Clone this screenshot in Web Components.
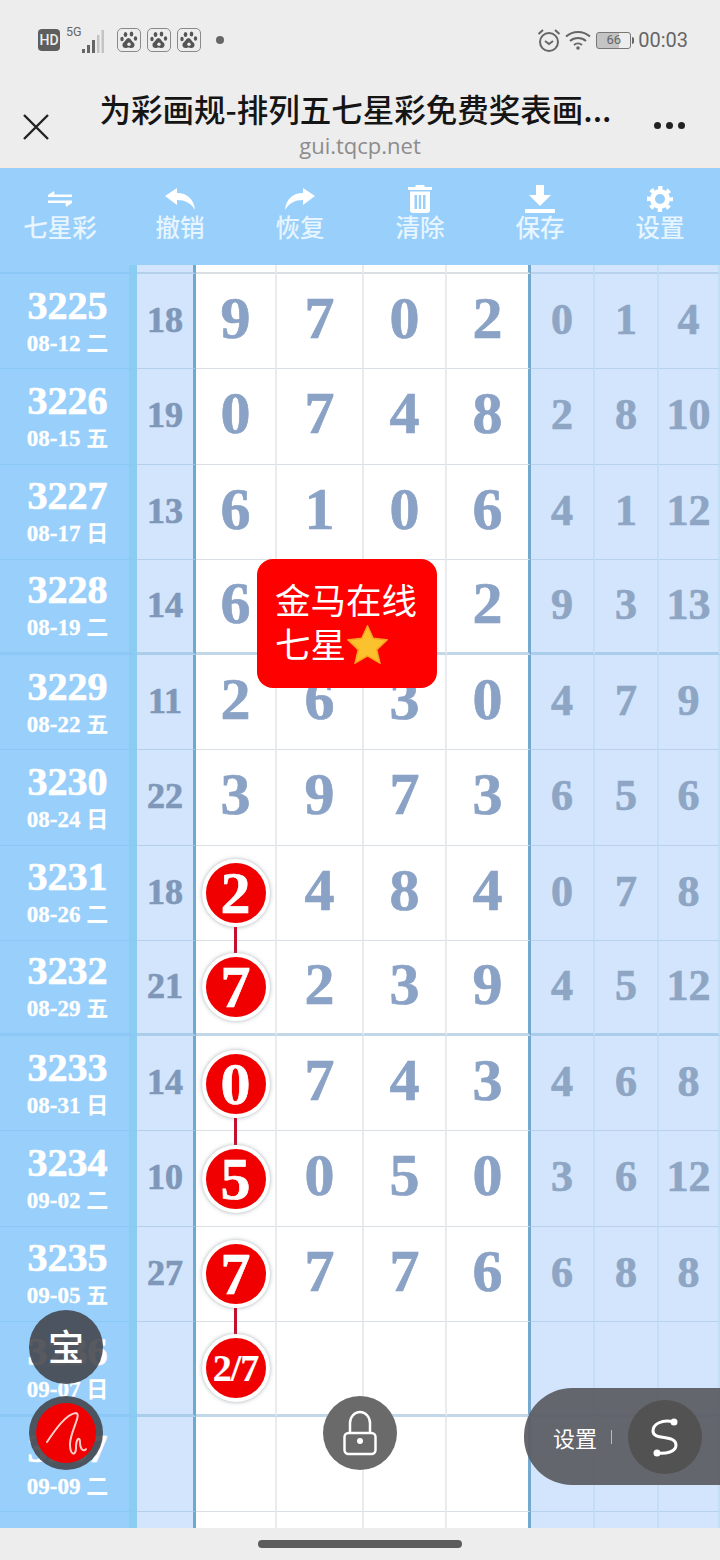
<!DOCTYPE html>
<html lang="zh">
<head>
<meta charset="utf-8">
<title>为彩画规</title>
<style>
  html, body { margin: 0; padding: 0; }
  body {
    width: 720px;
    height: 1560px;
    overflow: hidden;
    position: relative;
    background: #ededed;
    display: flex;
    flex-direction: column;
    font-family: Roboto, "Noto Sans CJK SC", sans-serif;
  }
</style>
</head>
<body>
  <status-bar></status-bar>
  <title-bar title-text="为彩画规-排列五七星彩免费奖表画..." url="gui.tqcp.net"></title-bar>
  <tool-bar>
    <tool-item>
      <svg slot="icon" width="24" height="16" viewBox="0 0 24 16" fill="#fff"><path d="M6 0 0 4v2h24V3.5H6.5zM0 9.5h24V12l-6 4-.5-4H0z"/></svg>
      七星彩
    </tool-item>
    <tool-item>
      <svg slot="icon" width="30" height="22" viewBox="0 0 30 22" fill="#fff"><path d="M0 8 12 0v5c10 0 17 6 18 17-4-7-10-10-18-10v5z"/></svg>
      撤销
    </tool-item>
    <tool-item>
      <svg slot="icon" width="30" height="22" viewBox="0 0 30 22" fill="#fff"><path d="M30 8 18 0v5C8 5 1 11 0 22c4-7 10-10 18-10v5z"/></svg>
      恢复
    </tool-item>
    <tool-item>
      <svg slot="icon" width="24" height="28" viewBox="0 0 24 28" fill="#fff"><path fill-rule="evenodd" d="M8 0h8l1 2h7v3H0V2h7zM2 6.500h20V25a3 3 0 0 1-3 3H5a3 3 0 0 1-3-3zM6.500 10v14h2.500V10zM10.800 10v14h2.400V10zM15 10v14h2.500V10z"/></svg>
      清除
    </tool-item>
    <tool-item>
      <svg slot="icon" width="30" height="28" viewBox="0 0 30 28" fill="#fff"><path d="M11 0h8v10h7L15 21 4 10h7zM1 24h28a1.500 1.500 0 0 1 0 4H1a1.500 1.500 0 0 1 0-4z"/></svg>
      保存
    </tool-item>
    <tool-item>
      <svg slot="icon" width="26" height="26" viewBox="-13 -13 26 26" fill="none" stroke="#fff"><circle r="10.800" stroke-width="4.400" stroke-dasharray="4.240 4.240" stroke-dashoffset="2.120"/><circle r="7.500" stroke-width="5"/></svg>
      设置
    </tool-item>
  </tool-bar>
  <lottery-table></lottery-table>
  <div style="height:32px;flex:none;display:flex;justify-content:center;align-items:center">
    <div style="width:204px;height:8px;border-radius:4px;background:#5c5c5c"></div>
  </div>

  <promo-box style="left:257px;top:559px">金马在线<br>七星<svg width="41" height="39" viewBox="0 0 40 38" style="vertical-align:-6px;margin-left:1px"><path fill="#fcc22e" stroke="#f6a623" stroke-width="1.500" d="M20 1l5.500 12 13.500 1.500-10 9.500 3 13-12-7-12 7 3-13-10-9.500L14.500 13z"/></svg></promo-box>

  <float-button style="left:29px;top:1310px"><span style="font-size:36px;line-height:1;font-weight:500;margin-top:-5px">宝</span></float-button>
  <float-button style="left:29px;top:1396px">
    <svg width="74" height="74" viewBox="0 0 74 74"><circle cx="37" cy="37" r="30" fill="#f00000"/><path fill="none" stroke="#ffd0c8" stroke-width="2" stroke-linecap="round" d="M18 46C26 34 37 18 47 17c6 1-6 19-6 31 0 12 6 12 6 4 0-10 4-12 4-6 0 8 4 10 6 7"/></svg>
  </float-button>
  <float-button tone="gray" style="left:323px;top:1396px">
    <svg width="74" height="74" viewBox="0 0 74 74" fill="none" stroke="#fff" stroke-width="2.500"><path d="M27 37V27a10 11 0 0 1 20 0v10"/><rect x="21.500" y="37" width="31" height="21" rx="4"/><circle cx="37" cy="45" r="3" fill="#fff" stroke="none"/></svg>
  </float-button>
  <side-pill style="top:1388px">设置</side-pill>

<script>
class StatusBar extends HTMLElement {
  constructor() {
    super();
    this.attachShadow({ mode: "open" });
    // same paw three times
    const paw = `
      <span class="paw"><svg width="20" height="20" viewBox="0 0 20 20" fill="#555">
        <ellipse cx="6.500" cy="4.500" rx="1.800" ry="2.500"/>
        <ellipse cx="12.500" cy="4" rx="1.800" ry="2.500"/>
        <ellipse cx="3" cy="9" rx="1.700" ry="2.200"/>
        <ellipse cx="16.500" cy="8.500" rx="1.700" ry="2.200"/>
        <path d="M9.500 8c2 0 3 3 5 4.500 2 2 1 5.500-2 5.500-1.500 0-2-.6-3-.6s-1.500.6-3 .6c-3 0-4-3.500-2-5.500C6.500 11 7.500 8 9.500 8z"/>
        <circle cx="10" cy="14.300" r="1.700" fill="#ededed"/>
      </svg></span>`;
    this.shadowRoot.innerHTML = `
      <style>
        :host {
          display: flex;
          align-items: center;
          height: 80px;
          flex: none;
          box-sizing: border-box;
          padding: 0 32px 0 38px;
          background: #ededed;
          color: #666;
          font-family: Roboto, sans-serif;
        }
        .hd { width: 22px; height: 22px; border-radius: 4px; background: #5e5e5e; color: #eee; font-size: 14px; font-weight: 500; line-height: 22px; text-align: center; }
        .net { position: relative; width: 38px; height: 26px; margin-left: 6px; }
        .net span { position: absolute; left: 0; top: -1px; font-size: 12.500px; line-height: 12px; }
        .net svg { position: absolute; left: 16px; top: 3px; }
        .paws { display: flex; gap: 6px; margin-left: 13px; }
        .paw { width: 24px; height: 24px; box-sizing: border-box; border: 1.500px solid #8a8a8a; border-radius: 5px; display: flex; align-items: center; justify-content: center; }
        .dot { width: 8px; height: 8px; border-radius: 50%; background: #666; margin-left: 15px; }
        .right { margin-left: auto; display: flex; align-items: center; }
        .battery { box-sizing: border-box; width: 35px; height: 17px; margin-left: 5px; border: 1.500px solid #777; border-radius: 3px; font-size: 13px; line-height: 14px; text-align: center; background: linear-gradient(90deg, #c4c4c4 0 66%, transparent 66%); }
        .nub { width: 2px; height: 7px; background: #666; border-radius: 0 2px 2px 0; margin-left: 1px; }
        .time { margin-left: 4px; font-size: 20px; }
      </style>
      <div class="hd">HD</div>
      <div class="net">
        <span>5G</span>
        <svg width="22" height="24" viewBox="0 0 22 24"><path fill="#666" d="M0 19h3v4H0zM5 15h3v8H5zM10 10h3v13h-3z"/><path fill="#c4c4c4" d="M15 5h2.500v18H15zM19.500 0H22v23h-2.500z"/></svg>
      </div>
      <div class="paws">${paw}${paw}${paw}</div>
      <div class="dot"></div>
      <div class="right">
        <svg width="24" height="25" viewBox="0 0 24 25" fill="none" stroke="#666" stroke-width="2"><circle cx="12" cy="14" r="9"/><path d="M8 13l4 3 4-3M1.500 6 6 2M22.500 6 18 2"/></svg>
        <svg style="margin-left:4px" width="26" height="20" viewBox="0 0 26 20" fill="none" stroke="#666" stroke-width="2"><path d="M1 6.500c7-6 17-6 24 0M5 11c4.500-4 11.500-4 16 0M9 15c2.300-2 5.700-2 8 0"/><circle cx="13" cy="18" r="1.800" fill="#666" stroke="none"/></svg>
        <div class="battery">66</div><div class="nub"></div>
        <div class="time">00:03</div>
      </div>`;
  }
}

class TitleBar extends HTMLElement {
  constructor() {
    super();
    this.attachShadow({ mode: "open" });
    this.shadowRoot.innerHTML = `
      <style>
        :host {
          display: grid;
          grid-template-columns: 72px 1fr 72px;
          align-items: center;
          height: 88px;
          flex: none;
          box-sizing: border-box;
          border-bottom: 3px solid #f3ebe6;
          background: #ededed;
        }
        .close { margin: 8px 0 0 22px; display: block; }
        .mid { text-align: center; min-width: 0; }
        .title { font: 500 31.500px/36px "Noto Sans CJK SC", sans-serif; color: #151515; white-space: nowrap; padding-right: 9px; margin-top: 4px; }
        .url { font: 22px/28px "Open Sans", Roboto, sans-serif; color: #8c8c8c; margin-top: 5px; }
        .dots { display: flex; gap: 5px; margin: 6px 0 0 6px; }
        .dots i { width: 7px; height: 7px; border-radius: 50%; background: #222; }
      </style>
      <svg class="close" width="28" height="28" viewBox="0 0 28 28" stroke="#222" stroke-width="2.400"><path d="M2 2l24 24M26 2 2 26"/></svg>
      <div class="mid">
        <div class="title"></div>
        <div class="url"></div>
      </div>
      <div class="dots"><i></i><i></i><i></i></div>`;
    this.shadowRoot.querySelector(".title").textContent = this.getAttribute("title-text");
    this.shadowRoot.querySelector(".url").textContent = this.getAttribute("url");
  }
}

class ToolBar extends HTMLElement {
  constructor() {
    super();
    this.attachShadow({ mode: "open" });
    this.shadowRoot.innerHTML = `
      <style>
        :host {
          display: grid;
          grid-template-columns: repeat(6, 1fr);
          height: 97px;
          flex: none;
          background: #99cffb;
        }
      </style>
      <slot></slot>`;
  }
}

class ToolItem extends HTMLElement {
  constructor() {
    super();
    this.attachShadow({ mode: "open" });
    this.shadowRoot.innerHTML = `
      <style>
        :host {
          display: flex;
          flex-direction: column;
          align-items: center;
          color: #e6f5ff;
          font: 500 24.500px/30px "Noto Sans CJK SC", sans-serif;
        }
        .icon { height: 30px; margin-top: 16px; display: flex; align-items: center; justify-content: center; }
        .label { margin-top: -2px; }
      </style>
      <div class="icon"><slot name="icon"></slot></div>
      <div class="label"><slot></slot></div>`;
  }
}

class LotteryBall extends HTMLElement {
  constructor() {
    super();
    this.attachShadow({ mode: "open" });
    this.shadowRoot.innerHTML = `
      <style>
        :host {
          position: relative;
          display: flex;
          align-items: center;
          justify-content: center;
          box-sizing: content-box;
          width: 60px;
          height: 60px;
          margin-bottom: -7px;
          border: 4px solid #fff;
          border-radius: 50%;
          background: #f00000;
          box-shadow: 0 0 4px rgba(110, 120, 130, .6);
          color: #fff;
          font-size: 60px;
          line-height: 60px;
          white-space: nowrap;
        }
        :host([small]) { font-size: 38px; letter-spacing: -1px; -webkit-text-stroke: .2px currentColor; }
        :host([link])::after {
          content: "";
          position: absolute;
          left: 50%;
          top: calc(100% + 4px);
          width: 3px;
          height: 27px;
          margin-left: -1.500px;
          background: #c4102c;
        }
      </style>
      <slot></slot>`;
  }
}

class LotteryRow extends HTMLElement {
  constructor() {
    super();
    this.attachShadow({ mode: "open" });
    this.shadowRoot.innerHTML = `
      <style>
        :host {
          display: grid;
          grid-template-columns: 137px 59px 81px 87px 83px 84px 64px 64px 61px;
          height: 95.250px;
          flex: none;
          font-family: "Liberation Serif", "Noto Sans CJK SC", serif;
          font-weight: bold;
          -webkit-text-stroke: .7px currentColor;
          --w: 1px;
        }
        :host([thick]) { --w: 3px; }
        :host([head]) { height: 9px; --w: 2px; }
        .c {
          box-sizing: border-box;
          display: flex;
          align-items: center;
          justify-content: center;
          border-bottom: var(--w) solid #dadfe5;
          border-right: 2px solid #e9ebee;
          background: #fff;
          color: #8aa2c5;
          font-size: 60px;
          line-height: 1;
          min-width: 0;
          padding-bottom: 6px;
        }
        .c.r4 { border-right: 3px solid #75a8cf; }
        .issue {
          flex-direction: column;
          background: #99cffb;
          border-right: 8px solid #8bcdf2;
          border-bottom-color: #8cc8f5;
          color: #fff;
          padding: 2px 0 0 0;
        }
        .issue b { font-size: 40px; line-height: 40px; padding-left: 6px; }
        .issue span { font-size: 23px; line-height: 30px; padding-left: 6px; white-space: nowrap; margin-top: -1px; -webkit-text-stroke: .3px currentColor; }
        .issue span i { font: bold 22px "Noto Sans CJK SC", sans-serif; -webkit-text-stroke: 0; }
        .sum {
          background: #d2e5fc;
          border-right: 3px solid #6ea9cf;
          border-bottom-color: #b4cfec;
          color: #7f97b8;
          font-size: 36px;
          padding-bottom: 2px;
        }
        .x {
          background: #d2e5fc;
          border-right-color: #c4def6;
          border-bottom-color: #b8d2ee;
          color: #8ea5c4;
          font-size: 44px;
          padding-bottom: 2px;
        }
        :host([thick]) .c:not(.issue):not(.sum):not(.x) { border-bottom-color: #c2d8e9; }
        :host([thick]) .sum, :host([thick]) .x { border-bottom-color: #a9cdea; }
      </style>
      <div class="c issue"></div>
      <div class="c sum"></div>
      <div class="c"></div><div class="c"></div><div class="c"></div><div class="c r4"></div>
      <div class="c x"></div><div class="c x"></div><div class="c x"></div>`;
  }

  fill(row) {
    const cells = this.shadowRoot.querySelectorAll(".c");
    if (row.issue) {
      const [day, week] = row.date.split(" ");
      cells[0].innerHTML = `<b>${row.issue}</b><span>${day} <i>${week}</i></span>`;
    }
    cells[1].textContent = row.sum || "";
    (row.nums || []).forEach((n, i) => {
      if (n === "") return;
      if (i === 0 && row.ball) {
        const ball = document.createElement("lottery-ball");
        ball.textContent = n;
        if (n.length > 1) ball.setAttribute("small", "");
        if (row.link) ball.setAttribute("link", "");
        cells[2].append(ball);
      } else {
        cells[2 + i].textContent = n;
      }
    });
    (row.extra || []).forEach((n, i) => { cells[6 + i].textContent = n; });
  }
}

const ROWS = [
  { issue: "3225", date: "08-12 二", sum: "18", nums: ["9", "7", "0", "2"], extra: ["0", "1", "4"] },
  { issue: "3226", date: "08-15 五", sum: "19", nums: ["0", "7", "4", "8"], extra: ["2", "8", "10"] },
  { issue: "3227", date: "08-17 日", sum: "13", nums: ["6", "1", "0", "6"], extra: ["4", "1", "12"] },
  { issue: "3228", date: "08-19 二", sum: "14", nums: ["6", "", "", "2"], extra: ["9", "3", "13"] },
  { issue: "3229", date: "08-22 五", sum: "11", nums: ["2", "6", "3", "0"], extra: ["4", "7", "9"] },
  { issue: "3230", date: "08-24 日", sum: "22", nums: ["3", "9", "7", "3"], extra: ["6", "5", "6"] },
  { issue: "3231", date: "08-26 二", sum: "18", ball: true, link: true, nums: ["2", "4", "8", "4"], extra: ["0", "7", "8"] },
  { issue: "3232", date: "08-29 五", sum: "21", ball: true, nums: ["7", "2", "3", "9"], extra: ["4", "5", "12"] },
  { issue: "3233", date: "08-31 日", sum: "14", ball: true, link: true, nums: ["0", "7", "4", "3"], extra: ["4", "6", "8"] },
  { issue: "3234", date: "09-02 二", sum: "10", ball: true, nums: ["5", "0", "5", "0"], extra: ["3", "6", "12"] },
  { issue: "3235", date: "09-05 五", sum: "27", ball: true, link: true, nums: ["7", "7", "7", "6"], extra: ["6", "8", "8"] },
  { issue: "3236", date: "09-07 日", ball: true, nums: ["2/7"] },
  { issue: "3237", date: "09-09 二" },
  {}
];

class LotteryTable extends HTMLElement {
  constructor() {
    super();
    this.attachShadow({ mode: "open" });
    this.shadowRoot.innerHTML = `
      <style>
        :host { display: flex; flex-direction: column; height: 1263px; flex: none; overflow: hidden; }
      </style>
      <lottery-row head></lottery-row>`;
  }

  connectedCallback() {
    ROWS.forEach((row, i) => {
      const el = document.createElement("lottery-row");
      if ((i + 1) % 4 === 0) el.setAttribute("thick", "");
      this.shadowRoot.append(el);
      el.fill(row);
    });
  }
}

class PromoBox extends HTMLElement {
  constructor() {
    super();
    this.attachShadow({ mode: "open" });
    this.shadowRoot.innerHTML = `
      <style>
        :host {
          position: absolute;
          display: block;
          box-sizing: border-box;
          width: 180px;
          height: 129px;
          padding: 18px 0 0 18px;
          border-radius: 16px;
          background: #fe0000;
          color: #fff;
          font: 35.500px/44px "Noto Sans CJK SC", sans-serif;
          white-space: nowrap;
        }
      </style>
      <slot></slot>`;
  }
}

class FloatButton extends HTMLElement {
  constructor() {
    super();
    this.attachShadow({ mode: "open" });
    this.shadowRoot.innerHTML = `
      <style>
        :host {
          position: absolute;
          display: flex;
          align-items: center;
          justify-content: center;
          width: 74px;
          height: 74px;
          border-radius: 50%;
          background: rgba(64, 66, 72, .87);
          color: #fff;
          font-family: "Noto Sans CJK SC", sans-serif;
          overflow: hidden;
        }
        :host([tone="gray"]) { background: #6a6a6a; }
      </style>
      <slot></slot>`;
  }
}

class SidePill extends HTMLElement {
  constructor() {
    super();
    this.attachShadow({ mode: "open" });
    this.shadowRoot.innerHTML = `
      <style>
        :host {
          position: absolute;
          right: 0;
          display: flex;
          align-items: center;
          box-sizing: border-box;
          width: 196px;
          height: 97px;
          padding-left: 29px;
          border-radius: 48px 0 0 48px;
          background: rgba(92, 94, 100, .94);
          color: #fff;
          font: 22px/1 "Noto Sans CJK SC", sans-serif;
        }
        .tick { width: 1px; height: 14px; margin-left: 14px; background: #bbb; }
        .round { width: 74px; height: 74px; margin-left: 16px; border-radius: 50%; background: #525252; flex: none; }
      </style>
      <span><slot></slot></span>
      <i class="tick"></i>
      <div class="round">
        <svg width="74" height="74" viewBox="0 0 74 74" fill="none" stroke="#fff" stroke-width="3"><path d="M46 22C34 19 25 24 25 31 25 41 48 34 48 45 48 52 38 54 29 53"/><circle cx="46" cy="22" r="3.500" fill="#fff" stroke="none"/><circle cx="29" cy="53" r="3.500" fill="#fff" stroke="none"/></svg>
      </div>`;
  }
}

customElements.define("status-bar", StatusBar);
customElements.define("title-bar", TitleBar);
customElements.define("tool-bar", ToolBar);
customElements.define("tool-item", ToolItem);
customElements.define("lottery-ball", LotteryBall);
customElements.define("lottery-row", LotteryRow);
customElements.define("lottery-table", LotteryTable);
customElements.define("promo-box", PromoBox);
customElements.define("float-button", FloatButton);
customElements.define("side-pill", SidePill);
</script>
</body>
</html>
